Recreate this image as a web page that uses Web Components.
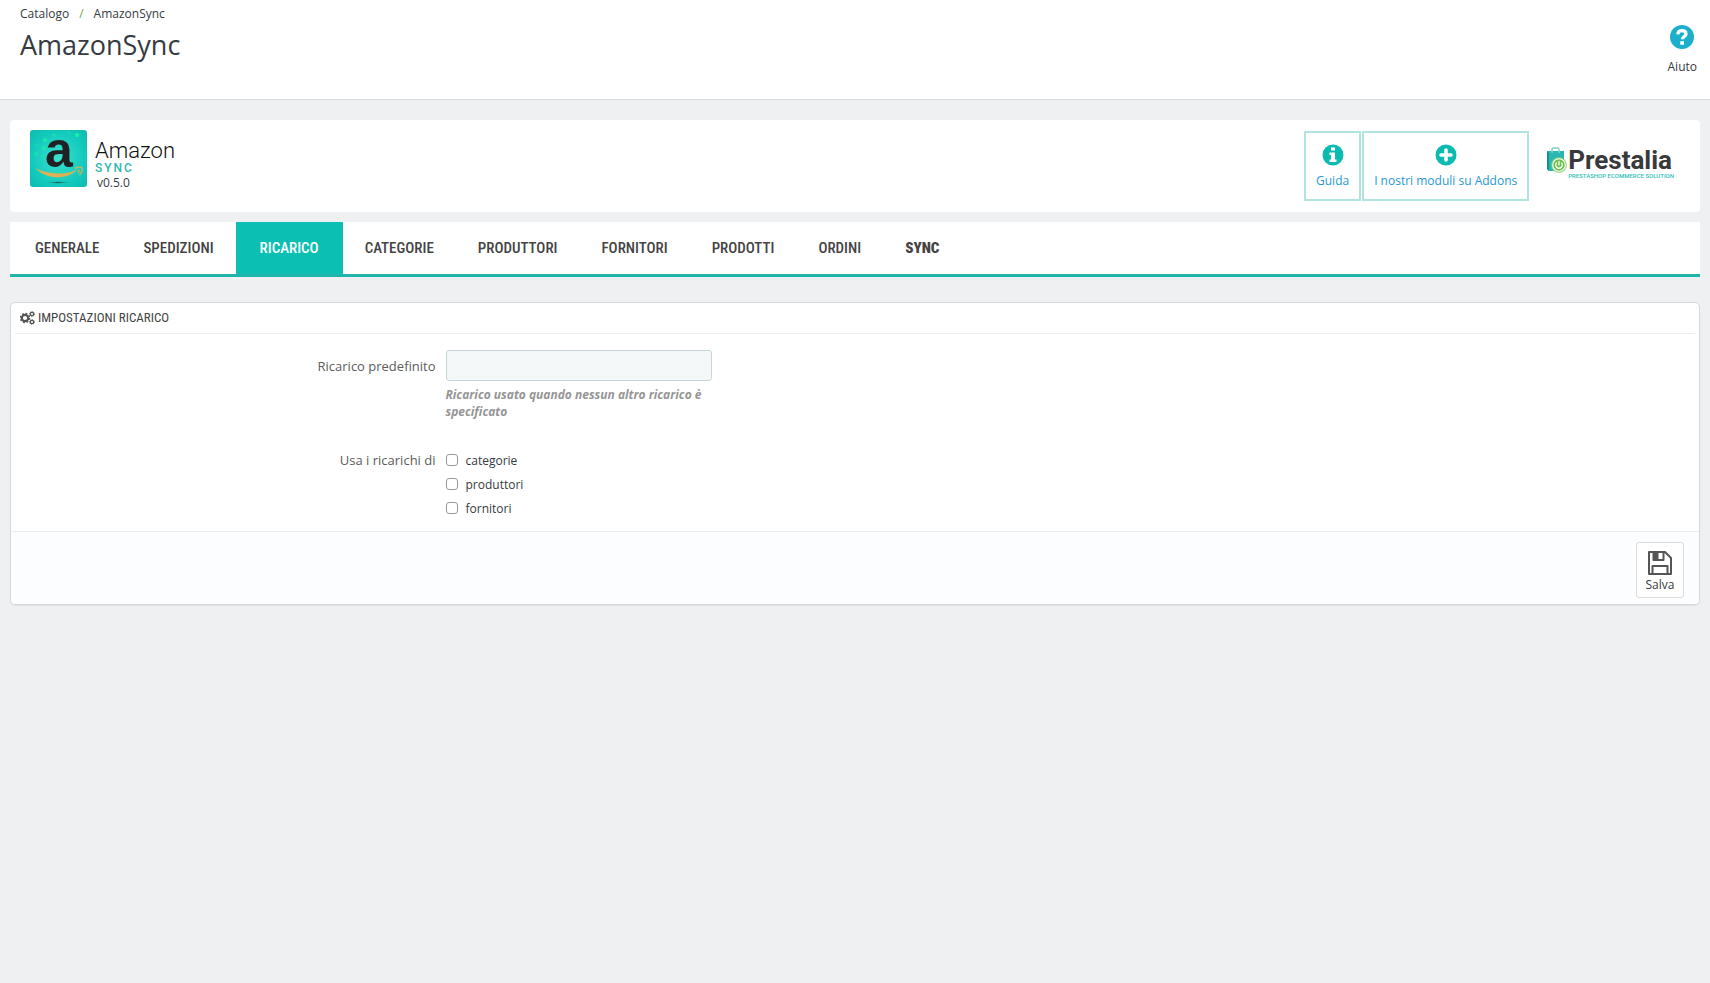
<!DOCTYPE html>
<html lang="it">
<head>
<meta charset="utf-8">
<title>AmazonSync</title>
<style>
body{margin:0;background:#eff0f2;font-family:"Open Sans",sans-serif;font-size:12px;line-height:17px;color:#363a41;
--teal:#0bbfb3;--narrow:"Ubuntu Condensed","Roboto Condensed","Liberation Sans Narrow",sans-serif}
</style>
</head>
<body>
<sync-app></sync-app>
<script>
const define = (name, html) => customElements.define(name, class extends HTMLElement {
  constructor() {
    super();
    const t = document.createElement('template');
    t.innerHTML = html;
    this.attachShadow({mode: 'open'}).append(t.content.cloneNode(true));
  }
});

define('page-header', `
<style>
:host{display:flex;justify-content:space-between;box-sizing:border-box;height:100px;background:#fff;border-bottom:1px solid #d8dadc;padding:5px 13px 0 20px}
nav{display:flex;gap:10px}
nav a{color:#363a41;text-decoration:none}
nav span{color:#72a045}
h1{margin:4px 0 0;font-size:27px;line-height:38px;font-weight:400}
.help{display:flex;flex-direction:column;align-items:center;gap:9px;padding-top:20px;color:#363a41;text-decoration:none;align-self:flex-start}
svg{display:block}
</style>
<div><nav aria-label="Percorso"><a href="#">Catalogo</a><span>/</span><a href="#">AmazonSync</a></nav><h1>AmazonSync</h1></div>
<a class="help" href="#"><svg width="24" height="24" viewBox="0 0 24 24"><circle cx="12" cy="12" r="12" fill="#1cafcb"/><path d="M7.8 9.300C8 6.600 9.600 5.700 12 5.700c2.300 0 4 1.200 4 3.200 0 2.600-3.600 2.700-3.600 5.400" fill="none" stroke="#fff" stroke-width="3.300"/><rect x="10.300" y="16.200" width="3.700" height="3.600" fill="#fff"/></svg>Aiuto</a>
`);

define('module-logo', `
<style>
:host{display:flex;gap:8px}
svg{display:block;overflow:visible}
.words{display:flex;flex-direction:column;padding-top:10px}
.name{font:300 22px/22px Roboto,sans-serif;color:#111}
.sync{font:500 12px/12px Roboto,sans-serif;letter-spacing:2px;color:#2fb9b3}
.version{padding-left:2px}
</style>
<svg width="57" height="57" viewBox="0 0 57 57">
<defs><radialGradient id="g" cx=".5" cy=".5" r=".7"><stop offset="0" stop-color="#3ce0cf"/><stop offset=".65" stop-color="#13cabd"/><stop offset="1" stop-color="#0fb9b0"/></radialGradient>
<radialGradient id="s"><stop offset="0" stop-color="#12544f"/><stop offset="1" stop-color="#18cabd" stop-opacity="0"/></radialGradient></defs>
<rect width="57" height="57" rx="3" fill="url(#g)"/>
<g fill="#16eda6"><circle cx="47" cy="5" r="2.300"/><circle cx="15" cy="10" r="2"/><circle cx="14" cy="18" r="2"/><circle cx="6" cy="24" r="2" opacity=".6"/><circle cx="13" cy="26" r="1.800" opacity=".6"/><circle cx="7" cy="15" r="2" opacity=".3"/><circle cx="24" cy="5" r="2" opacity=".5"/><circle cx="39" cy="3" r="1.800" opacity=".4"/></g>
<text x="15" y="37" font-family="Liberation Sans,sans-serif" font-weight="700" font-size="50" fill="#1f2122">a</text>
<path d="M5 38C17 44 36 46 48 39C37 50.500 17 50 5 38Z" fill="#deb052"/><path d="M45 38.500C49 36.500 51 37 52 38C52.500 40 51.500 43 49.500 45M48.500 39.500L49 43" fill="none" stroke="#deb052" stroke-width="1.300"/>
<ellipse cx="28" cy="52.500" rx="15" ry="1.500" fill="url(#s)"/>
</svg>
<div class="words"><span class="name">Amazon</span><span class="sync">SYNC</span><span class="version">v0.5.0</span></div>
`);

define('vendor-logo', `
<style>
:host{display:flex;gap:1px}
svg{display:block}
.words{display:flex;flex-direction:column}
.name{font:700 26px/26px Roboto,sans-serif;color:#37393b}
.tag{font:500 6px/6px Roboto,sans-serif;color:#2fc0b8;white-space:nowrap}
</style>
<svg width="20" height="28" viewBox="0 0 20 28"><path d="M0 4H17V24H2L0 22Z" fill="#27b9b1"/><path d="M0 4L2 6V24L0 22Z" fill="#168f8c"/><path d="M5 6V2.500Q5 1 6.500 1H10.500Q12 1 12 2.500V6" fill="none" stroke="#7ed2cd" stroke-width="1.500"/><circle cx="12" cy="18" r="7.800" fill="#8ccf70"/><circle cx="12" cy="18" r="6.800" fill="#fff"/><circle cx="12" cy="18" r="5.700" fill="#6cc04a"/><path d="M9.800 15.500A3.300 3.300 0 1 0 14.200 15.500M12 14V18.500" fill="none" stroke="#fff" stroke-width="1.300"/></svg>
<div class="words"><span class="name">Prestalia</span><span class="tag">PRESTASHOP ECOMMERCE SOLUTION</span></div>
`);

define('module-link', `
<style>
:host{display:block}
a{display:flex;flex-direction:column;align-items:center;gap:6px;box-sizing:border-box;height:70px;border:2px solid #b1e4df;padding:11px 10px 0;color:#1f98d3;text-decoration:none}
</style>
<a href="#"><slot name="icon"></slot><slot></slot></a>
`);

define('module-bar', `
<style>
:host{display:flex;justify-content:space-between;box-sizing:border-box;height:92px;background:#fff;border-radius:4px;padding:10px 26px 0 20px}
.right{display:flex;gap:1px;padding-top:1px}
svg{display:block}
vendor-logo{margin:16px 0 0 17px}
</style>
<module-logo></module-logo>
<div class="right">
<module-link><svg slot="icon" width="22" height="22" viewBox="0 0 22 22"><circle cx="11" cy="11" r="10.500" fill="#0bbab0"/><path d="M9 3.500H13V6.500H9ZM7.500 8.500H13V15.500H14.500V18H7.500V15.500H9V11H7.500Z" fill="#fff"/></svg>Guida</module-link>
<module-link><svg slot="icon" width="22" height="22" viewBox="0 0 22 22"><circle cx="11" cy="11" r="10.500" fill="#0bbab0"/><path d="M11 6V16M6 11H16" stroke="#fff" stroke-width="3.600" stroke-linecap="round"/></svg>I nostri moduli su Addons</module-link>
<vendor-logo></vendor-logo>
</div>
`);

define('module-tabs', `
<style>
:host{display:block;background:#fff;border-bottom:3px solid #1fb5ad}
nav{display:flex;padding-left:3px}
a{box-sizing:border-box;height:52px;padding:0 22px;font:500 15px/53px var(--narrow);color:#444;text-decoration:none}
a[aria-current]{background:var(--teal);color:#fff;padding:0 24px}
a.strong{font-weight:900}
</style>
<nav aria-label="Sezioni"><a href="#">GENERALE</a><a href="#">SPEDIZIONI</a><a href="#" aria-current="page">RICARICO</a><a href="#">CATEGORIE</a><a href="#">PRODUTTORI</a><a href="#">FORNITORI</a><a href="#">PRODOTTI</a><a href="#">ORDINI</a><a href="#" class="strong">SYNC</a></nav>
`);

define('check-option', `
<style>
:host{display:block}
label{display:flex;align-items:center;gap:8px;height:24px}
input{appearance:none;box-sizing:border-box;width:12px;height:12px;margin:0;border:1px solid #999;border-radius:3px;background:#fff}
input:checked{background:var(--teal)}
</style>
<label><input type="checkbox"><slot></slot></label>
`);

define('settings-panel', `
<style>
:host{display:block;background:#fff;border:1px solid #d3d8db;border-radius:5px;box-shadow:0 1px 1px #e0e3e5;overflow:hidden}
h2{display:flex;align-items:center;gap:3px;margin:0 4px;height:30px;padding-left:5px;border-bottom:1px solid #eceeef;font:400 13px/30px var(--narrow);color:#444}
form{margin:0}
.row{display:grid;grid-template-columns:3fr 2fr 7fr;margin:0 15px}
.row>*{padding:0 5px}
.row+.row{margin-top:28px}
.fields{padding:16px 0 11px}
.label{text-align:right;font-size:13px;line-height:32px;color:#5c5c5c}
.label.short{line-height:25px}
#markup{display:block;box-sizing:border-box;width:100%;height:31px;border:1px solid #c7d6db;border-radius:3px;background:#f5f8f9;padding:0 8px;font:inherit}
.hint{margin:5px 0 0;font-style:italic;font-weight:700;color:#959595}
footer{display:flex;justify-content:flex-end;border-top:1px solid #eceeef;background:#fcfdfe;padding:10px 15px 6px}
button{display:flex;flex-direction:column;align-items:center;gap:1px;box-sizing:border-box;width:48px;height:56px;border:1px solid #ddd;border-radius:3px;background:#fff;padding:8px 0 0;font:inherit;color:#363a41}
</style>
<h2><svg width="15" height="14" viewBox="0 0 15 14" fill="none" stroke="#555"><circle cx="5" cy="7" r="3.200" stroke-width="2.200"/><circle cx="5" cy="7" r="4.600" stroke-width="1.400" stroke-dasharray="1.800 1.813"/><circle cx="12" cy="3" r="1.700" stroke-width="1.300"/><circle cx="12" cy="3" r="2.500" stroke-width=".8" stroke-dasharray="1 .963"/><circle cx="12" cy="11" r="1.700" stroke-width="1.300"/><circle cx="12" cy="11" r="2.500" stroke-width=".8" stroke-dasharray="1 .963"/></svg>IMPOSTAZIONI RICARICO</h2>
<form>
<div class="fields">
<div class="row"><label class="label" for="markup">Ricarico predefinito</label><div><input id="markup" type="text"><p class="hint">Ricarico usato quando nessun altro ricarico è specificato</p></div></div>
<div class="row" role="group" aria-labelledby="use"><span class="label short" id="use">Usa i ricarichi di</span><div><check-option>categorie</check-option><check-option>produttori</check-option><check-option>fornitori</check-option></div></div>
</div>
<footer><button type="button"><svg width="24" height="24" viewBox="0 0 24 24"><path d="M1 1H17L23 7V23H1ZM4.500 23V15H19.500V23M5.500 1V9H15.500V1" fill="none" stroke="#555" stroke-width="2" stroke-linejoin="round"/><path d="M5.500 1H10.500V9H5.500Z" fill="#555"/></svg>Salva</button></footer>
</form>
`);

define('sync-app', `
<style>
:host{display:block}
main{display:flex;flex-direction:column;padding:20px 10px}
module-tabs{margin:10px 0 25px}
</style>
<page-header></page-header>
<main><module-bar></module-bar><module-tabs></module-tabs><settings-panel></settings-panel></main>
`);
</script>
</body>
</html>
